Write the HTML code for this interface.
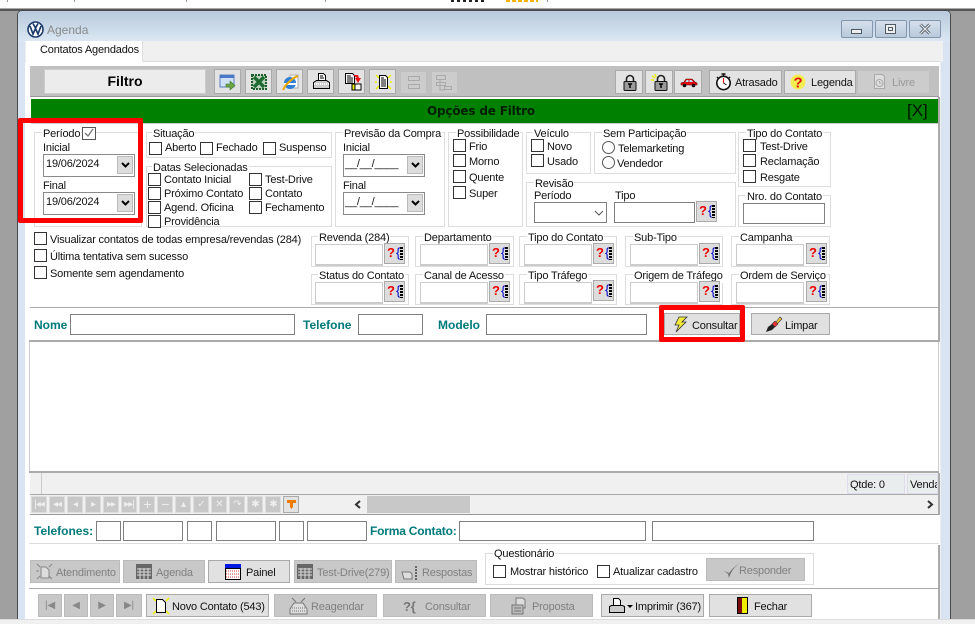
<!DOCTYPE html>
<html><head><meta charset="utf-8"><style>
html,body{margin:0;padding:0;background:#fff}
#p{position:relative;width:975px;height:624px;overflow:hidden;background:#fff;font:11px/13px "Liberation Sans",sans-serif;color:#111;letter-spacing:-.18px}
#p div,#p span.t,#p i,#p svg{position:absolute;box-sizing:border-box}
.t{white-space:nowrap;position:absolute;margin-top:1px}
i{display:block;width:13px;height:13px;border:1px solid #333;background:#fff}
.r{border-radius:50%;border-color:#555}
.g{border:1px solid #ddd}
.l{background:#fff;padding:0 1px;height:13px;white-space:nowrap}
.in{border:1px solid #808080;background:#fff}
.lin{border:1px solid #ccc;background:#fff;border-width:1px 1px 2px 1px;width:68px;height:22px}
.q{width:21px;height:21px;background:#ddd;border:1px solid #aaa;font:bold 13px/18px "Liberation Sans",sans-serif;color:#e00;padding-left:2px;white-space:nowrap;letter-spacing:0}
.q b{color:#00c;font-weight:normal;margin-left:1px}
.q u{position:absolute;right:1px;top:3px;width:3px;height:13px;background:repeating-linear-gradient(#000 0 2px,#ddd 2px 3px)}
.btn{background:#e1e1e1;border:1px solid #aaa;text-align:center}
.dis{background:#c8c8c8;border:1px solid #bbb;color:#808080}
.tb{background:#e3e3e3;border:1px solid #aaa}
.n{background:#c8c8c8;border:1px solid #ddd;width:16px;height:17px;color:#eee;font:10px/15px "Liberation Sans",sans-serif;text-align:center;letter-spacing:-1px}
.nb{background:#c8c8c8;border:1px solid #bbb;width:24px;height:23px;color:#888;font:10px/21px "Liberation Sans",sans-serif;text-align:center}
#p .te{color:#007a7a;font:bold 12px/14px "Liberation Sans",sans-serif;white-space:nowrap;letter-spacing:0;margin-top:0}
.combo{border:1px solid #8a8a8a;background:#fff}
.ar{background:#ddd;border:1px solid #bbb;width:16px;height:18px}
</style></head><body><div id="p">

<!-- top strip -->
<div style="left:7px;top:0;width:1px;height:2px;background:#999"></div>
<div style="left:74px;top:0;width:1px;height:2px;background:#999"></div>
<div style="left:186px;top:0;width:1px;height:2px;background:#999"></div>
<div style="left:325px;top:0;width:1px;height:2px;background:#999"></div>
<div style="left:451px;top:0;width:34px;height:2px;background:repeating-linear-gradient(90deg,#222 0 3px,#fff 3px 6px)"></div>
<div style="left:506px;top:0;width:32px;height:2px;background:repeating-linear-gradient(90deg,#f5b400 0 4px,#fff 4px 6px)"></div>
<div style="left:547px;top:0;width:1px;height:2px;background:#999"></div>

<!-- desktop / frame -->
<div style="left:0;top:8px;width:975px;height:2px;background:#aaa"></div>
<div style="left:0;top:9px;width:975px;height:2px;background:#555"></div>
<div style="left:0;top:11px;width:975px;height:608px;background:#a0a0a0"></div>
<div style="left:0;top:619px;width:975px;height:5px;background:#f0f0f0;border-top:1px solid #ddd"></div>
<div style="left:17px;top:10px;width:934px;height:609px;background:#4a4a4a;border-radius:5px 5px 0 0"></div>
<div style="left:18px;top:11px;width:932px;height:608px;background:#d8e4f1;border-radius:4px 4px 0 0"></div>
<div style="left:18px;top:11px;width:932px;height:30px;background:linear-gradient(#b7c9dc,#dbe7f3);border-radius:4px 4px 0 0"></div>

<!-- logo and title -->
<svg style="left:27px;top:21px" width="17" height="17" viewBox="0 0 17 17"><circle cx="8.5" cy="8.5" r="7.5" fill="#fff" stroke="#1b3a6b" stroke-width="1.6"/><path d="M3 5 L6 13 L8.5 7.5 L11 13 L14 5 M6 2.5 L8.5 7 L11 2.5" fill="none" stroke="#1b3a6b" stroke-width="1.7"/></svg>
<span class="t" style="left:47px;top:23px;font-size:12px;color:#8a8a8a;letter-spacing:0">Agenda</span>

<!-- window buttons -->
<div style="left:841px;top:20px;width:32px;height:18px;border:1px solid #8296ad;border-radius:2px;background:linear-gradient(#d5e0ec,#b9c9da)"><div style="left:9px;top:8px;width:11px;height:5px;border:1px solid #4d5a68;background:#eee"></div></div>
<div style="left:875px;top:20px;width:32px;height:18px;border:1px solid #8296ad;border-radius:2px;background:linear-gradient(#d5e0ec,#b9c9da)"><div style="left:9px;top:3px;width:11px;height:10px;border:1px solid #4d5a68;background:#eee"><div style="left:2px;top:2px;width:5px;height:4px;border:1px solid #4d5a68"></div></div></div>
<div style="left:909px;top:20px;width:32px;height:18px;border:1px solid #8296ad;border-radius:2px;background:linear-gradient(#d5e0ec,#b9c9da)"><svg style="left:9px;top:2px" width="12" height="12" viewBox="0 0 12 12"><path d="M1.5 1.5 L10.5 10.5 M10.5 1.5 L1.5 10.5" stroke="#4d5a68" stroke-width="3"/><path d="M1.5 1.5 L10.5 10.5 M10.5 1.5 L1.5 10.5" stroke="#eee" stroke-width="1.2"/></svg></div>

<!-- tab strip -->
<div style="left:25px;top:41px;width:918px;height:21px;background:#f0f0f0"></div>
<div style="left:26px;top:41px;width:117px;height:21px;background:#fff;border-right:1px solid #ddd"></div>
<span class="t" style="left:40px;top:43px">Contatos Agendados</span>
<div style="left:25px;top:61px;width:916px;height:558px;background:#fff;border-top:1px solid #ddd;border-right:1px solid #eee"></div>
<div style="left:26px;top:61px;width:116px;height:2px;background:#fff"></div>

<!-- toolbar -->
<div style="left:30px;top:66px;width:909px;height:31px;background:#c0c0c0;border-bottom:1px solid #999"></div>
<div class="tb" style="left:44px;top:69px;width:162px;height:25px;background:#ececec;border-color:#ccc;font:bold 14px/23px 'Liberation Sans',sans-serif;text-align:center;color:#000;letter-spacing:0">Filtro</div>

<div class="tb" style="left:214px;top:69px;width:27px;height:25px"><svg style="left:4px;top:4px" width="18" height="17" viewBox="0 0 18 17"><rect x="1" y="1" width="14" height="12" fill="#cfe0f7" stroke="#5c7fc0"/><rect x="1" y="1" width="14" height="3" fill="#4a78c8"/><path d="M7 10h4V7l5 4.500-5 4.500v-3H7z" fill="#6da544" stroke="#3d7a2a" stroke-width=".6"/></svg></div>
<div class="tb" style="left:245px;top:69px;width:27px;height:25px"><svg style="left:5px;top:4px" width="16" height="16" viewBox="0 0 16 16"><rect x="1" y="1" width="14" height="14" fill="#bcd0bc" stroke="#1d5c2b" stroke-width="2" stroke-dasharray="2 1"/><path d="M3 3 L13 13 M13 3 L3 13" stroke="#1d6b30" stroke-width="3.400"/></svg></div>
<div class="tb" style="left:276px;top:69px;width:27px;height:25px"><svg style="left:4px;top:3px" width="19" height="18" viewBox="0 0 19 18"><path d="M9 2h8v13H9z" fill="#fff" stroke="#aaa"/><circle cx="9" cy="10" r="6" fill="#2f7fd8"/><path d="M3 11 h12" stroke="#fff" stroke-width="2"/><path d="M2 17 C4 12 11 5 17 3" stroke="#f0a800" stroke-width="2" fill="none"/></svg></div>
<div class="tb" style="left:307px;top:69px;width:27px;height:25px"><svg style="left:5px;top:3px" width="17" height="17" viewBox="0 0 17 17"><path d="M5.500.5h5l2 2v6h-7z" fill="#fff" stroke="#000"/><path d="M7 3h3M7 5h4" stroke="#000"/><path d="M.5 9.500l3-2h10l3 2v6H.5z" fill="#ccc" stroke="#000"/><path d="M1 11h15" stroke="#fff" stroke-dasharray="1 1" stroke-width="2"/></svg></div>
<div class="tb" style="left:338px;top:69px;width:27px;height:25px"><svg style="left:5px;top:3px" width="18" height="18" viewBox="0 0 18 18"><path d="M1.500.5h7l2 2v8h-9z" fill="#fff" stroke="#000"/><path d="M3 3h4M3 5h6M3 7h6M3 9h6" stroke="#000"/><path d="M9 2h5l1 3h2l-3 5-3-5h2" fill="#e11"/><rect x="11" y="11" width="6" height="6" fill="#fff" stroke="#000"/><rect x="8" y="11" width="3" height="6" fill="#ee0" stroke="#000"/></svg></div>
<div class="tb" style="left:369px;top:69px;width:27px;height:25px"><svg style="left:4px;top:3px" width="19" height="18" viewBox="0 0 19 18"><path d="M2 2l3 3M17 2l-3 3M2 16l3-3M17 16l-3-3M1 9h2M16 9h2" stroke="#ee0" stroke-width="1.500"/><path d="M5.500 2.500h6l2 2v11h-8z" fill="#fff" stroke="#000"/><path d="M7 5h3M7 7h5M7 9h5M7 11h5M7 13h5" stroke="#000"/></svg></div>
<div style="left:401px;top:72px;width:25px;height:21px;background:#ccc"><svg style="left:6px;top:4px" width="14" height="14" viewBox="0 0 14 14" fill="none" stroke="#aaa"><rect x="1.500" y=".5" width="11" height="4"/><rect x="1.500" y="8.500" width="11" height="4"/></svg></div>
<div style="left:432px;top:72px;width:25px;height:21px;background:#ccc"><svg style="left:4px;top:3px" width="17" height="16" viewBox="0 0 17 16" fill="none" stroke="#aaa"><rect x=".5" y=".5" width="9" height="4"/><rect x=".5" y="7.500" width="9" height="3"/><path d="M4 4.500v10.500h5"/><rect x="8.500" y="11.500" width="7" height="3"/></svg></div>

<div class="tb" style="left:615px;top:70px;width:28px;height:24px"><svg style="left:7px;top:3px" width="14" height="17" viewBox="0 0 14 17"><path d="M3.500 8V5a3.500 3.500 0 017 0v3" fill="none" stroke="#222" stroke-width="1.600"/><rect x="1" y="7.500" width="12" height="9" rx="1" fill="#999" stroke="#111"/><path d="M7 10v4M5 10h4" stroke="#000" stroke-width="1.500"/></svg></div>
<div class="tb" style="left:645px;top:70px;width:28px;height:24px"><svg style="left:5px;top:3px" width="18" height="17" viewBox="0 0 18 17"><path d="M1 2l3 2M0 6h3M4 0l1 3" stroke="#ee0" stroke-width="1.400"/><path d="M6.500 8V5a3.500 3.500 0 017 0v3" fill="none" stroke="#222" stroke-width="1.600"/><rect x="4" y="7.500" width="12" height="9" rx="1" fill="#999" stroke="#111"/><path d="M10 10v4M8 10h4" stroke="#000" stroke-width="1.500"/></svg></div>
<div class="tb" style="left:674px;top:70px;width:28px;height:24px"><svg style="left:5px;top:6px" width="18" height="11" viewBox="0 0 18 11"><path d="M1 6l3-1 2-3h6l3 3 2 1v2H1z" fill="#e01010" stroke="#600" stroke-width=".6"/><path d="M6.500 3h2v2h-3zM9.500 3h2l1.500 2H9.500z" fill="#bfe4ff"/><circle cx="4.500" cy="8.500" r="1.800" fill="#111"/><circle cx="13.500" cy="8.500" r="1.800" fill="#111"/></svg></div>

<div class="tb" style="left:709px;top:70px;width:73px;height:24px"><svg style="left:5px;top:2px" width="17" height="18" viewBox="0 0 17 18"><circle cx="8.500" cy="10" r="6.700" fill="#fff" stroke="#111" stroke-width="1.600"/><path d="M6.500 1h4M8.500 1v2M2 4l2 2M15 4l-2 2" stroke="#111" stroke-width="1.400"/><path d="M8.500 5v5" stroke="#e11" stroke-width="1.200"/><path d="M8.500 10l3 2" stroke="#111"/></svg><span class="t" style="left:25px;top:5px">Atrasado</span></div>
<div class="tb" style="left:784px;top:70px;width:72px;height:24px"><svg style="left:5px;top:3px" width="16" height="16" viewBox="0 0 16 16"><circle cx="8" cy="8" r="7.500" fill="#f2ee50"/><text x="8" y="13.500" text-anchor="middle" font-family="Liberation Sans" font-weight="bold" font-size="15" fill="#e01010">?</text></svg><span class="t" style="left:26px;top:5px">Legenda</span></div>
<div style="left:858px;top:71px;width:71px;height:22px;background:#ccc;color:#999"><svg style="left:14px;top:2px" width="15" height="17" viewBox="0 0 15 17" fill="none" stroke="#aaa"><path d="M2.500 1.500h8l2 2v12h-10z" fill="#ddd"/><circle cx="7.500" cy="10" r="3.500"/><path d="M7.500 8v2h2"/></svg><span class="t" style="left:34px;top:5px">Livre</span></div>

<!-- green bar -->
<div style="left:31px;top:99px;width:907px;height:25px;background:#008000;border-bottom:1px solid #ccc"></div>
<span class="t" style="left:427px;top:103px;font:bold 12px/15px 'DejaVu Sans',sans-serif;color:#021f02">Opções de Filtro</span>
<span class="t" style="left:907px;top:101px;font:17px/18px 'Liberation Sans',sans-serif;color:#010;letter-spacing:0">[X]</span>
<div style="left:938px;top:97px;width:2px;height:244px;background:#aaa"></div>

<!-- Periodo group -->
<div class="g" style="left:34px;top:132px;width:108px;height:95px"></div>
<span class="t l" style="left:42px;top:127px">Período</span>
<i style="left:82px;top:127px;width:14px;height:13px;border-color:#555;z-index:1"></i>
<svg style="left:83px;top:128px;z-index:2" width="12" height="11" viewBox="0 0 12 11"><path d="M2 5l3 3 5-7" fill="none" stroke="#777" stroke-width="1.300"/></svg>
<span class="t" style="left:43px;top:141px">Inicial</span>
<div class="combo" style="left:43px;top:154px;width:92px;height:23px"></div>
<span class="t" style="left:46px;top:157px">19/06/2024</span>
<div class="ar" style="left:117px;top:156px"><svg style="left:3px;top:5px" width="9" height="7" viewBox="0 0 9 7"><path d="M1 1l3.500 3.500L8 1" fill="none" stroke="#000" stroke-width="2"/></svg></div>
<span class="t" style="left:43px;top:179px">Final</span>
<div class="combo" style="left:43px;top:192px;width:92px;height:23px"></div>
<span class="t" style="left:46px;top:195px">19/06/2024</span>
<div class="ar" style="left:117px;top:194px"><svg style="left:3px;top:5px" width="9" height="7" viewBox="0 0 9 7"><path d="M1 1l3.500 3.500L8 1" fill="none" stroke="#000" stroke-width="2"/></svg></div>

<!-- Situacao -->
<div class="g" style="left:146px;top:132px;width:186px;height:26px"></div>
<span class="t l" style="left:152px;top:127px">Situação</span>
<i style="left:149px;top:142px"></i><span class="t" style="left:165px;top:141px">Aberto</span>
<i style="left:200px;top:142px"></i><span class="t" style="left:216px;top:141px">Fechado</span>
<i style="left:263px;top:142px"></i><span class="t" style="left:279px;top:141px">Suspenso</span>

<!-- Datas -->
<div class="g" style="left:146px;top:166px;width:186px;height:61px"></div>
<span class="t l" style="left:152px;top:161px">Datas Selecionadas</span>
<i style="left:148px;top:173px"></i><span class="t" style="left:164px;top:173px">Contato Inicial</span>
<i style="left:148px;top:187px"></i><span class="t" style="left:164px;top:187px">Próximo Contato</span>
<i style="left:148px;top:201px"></i><span class="t" style="left:164px;top:201px">Agend. Oficina</span>
<i style="left:148px;top:215px"></i><span class="t" style="left:164px;top:215px">Providência</span>
<i style="left:249px;top:173px"></i><span class="t" style="left:265px;top:173px">Test-Drive</span>
<i style="left:249px;top:187px"></i><span class="t" style="left:265px;top:187px">Contato</span>
<i style="left:249px;top:201px"></i><span class="t" style="left:265px;top:201px">Fechamento</span>

<!-- Previsao -->
<div class="g" style="left:335px;top:132px;width:110px;height:95px"></div>
<span class="t l" style="left:343px;top:127px">Previsão da Compra</span>
<span class="t" style="left:343px;top:141px">Inicial</span>
<div class="combo" style="left:343px;top:154px;width:82px;height:23px"></div>
<span class="t" style="left:345px;top:157px">__/__/____</span>
<div class="ar" style="left:407px;top:156px"><svg style="left:3px;top:5px" width="9" height="7" viewBox="0 0 9 7"><path d="M1 1l3.500 3.500L8 1" fill="none" stroke="#000" stroke-width="2"/></svg></div>
<span class="t" style="left:343px;top:179px">Final</span>
<div class="combo" style="left:343px;top:192px;width:82px;height:23px"></div>
<span class="t" style="left:345px;top:195px">__/__/____</span>
<div class="ar" style="left:407px;top:194px"><svg style="left:3px;top:5px" width="9" height="7" viewBox="0 0 9 7"><path d="M1 1l3.500 3.500L8 1" fill="none" stroke="#000" stroke-width="2"/></svg></div>

<!-- Possibilidade -->
<div class="g" style="left:448px;top:132px;width:75px;height:95px"></div>
<span class="t l" style="left:456px;top:127px">Possibilidade</span>
<i style="left:453px;top:139px"></i><span class="t" style="left:469px;top:140px">Frio</span>
<i style="left:453px;top:154px"></i><span class="t" style="left:469px;top:155px">Morno</span>
<i style="left:453px;top:170px"></i><span class="t" style="left:469px;top:171px">Quente</span>
<i style="left:453px;top:186px"></i><span class="t" style="left:469px;top:187px">Super</span>

<!-- Veiculo -->
<div class="g" style="left:526px;top:132px;width:65px;height:42px"></div>
<span class="t l" style="left:533px;top:127px">Veículo</span>
<i style="left:531px;top:139px"></i><span class="t" style="left:547px;top:140px">Novo</span>
<i style="left:531px;top:154px"></i><span class="t" style="left:547px;top:155px">Usado</span>

<!-- Sem Participacao -->
<div class="g" style="left:594px;top:132px;width:142px;height:42px"></div>
<span class="t l" style="left:602px;top:127px">Sem Participação</span>
<i class="r" style="left:602px;top:141px"></i><span class="t" style="left:618px;top:142px">Telemarketing</span>
<i class="r" style="left:602px;top:156px"></i><span class="t" style="left:617px;top:157px">Vendedor</span>

<!-- Revisao -->
<div class="g" style="left:526px;top:182px;width:210px;height:45px"></div>
<span class="t l" style="left:534px;top:177px">Revisão</span>
<span class="t" style="left:534px;top:189px">Período</span>
<span class="t" style="left:615px;top:189px">Tipo</span>
<div class="in" style="left:534px;top:202px;width:73px;height:21px"><svg style="left:59px;top:7px" width="10" height="7" viewBox="0 0 10 7"><path d="M1 1l4 4 4-4" fill="none" stroke="#555"/></svg></div>
<div class="in" style="left:614px;top:202px;width:81px;height:21px"></div>
<div class="q" style="left:696px;top:201px">?<b>{</b><u></u></div>

<!-- Tipo do Contato -->
<div class="g" style="left:738px;top:132px;width:93px;height:55px"></div>
<span class="t l" style="left:746px;top:127px">Tipo do Contato</span>
<i style="left:743px;top:139px"></i><span class="t" style="left:760px;top:140px">Test-Drive</span>
<i style="left:743px;top:154px"></i><span class="t" style="left:760px;top:155px">Reclamação</span>
<i style="left:743px;top:170px"></i><span class="t" style="left:760px;top:171px">Resgate</span>

<!-- Nro -->
<div class="g" style="left:738px;top:195px;width:93px;height:32px"></div>
<span class="t l" style="left:746px;top:190px">Nro. do Contato</span>
<div class="in" style="left:743px;top:203px;width:82px;height:21px"></div>

<!-- checks -->
<i style="left:34px;top:232px"></i><span class="t" style="left:50px;top:233px">Visualizar contatos de todas empresa/revendas (284)</span>
<i style="left:34px;top:249px"></i><span class="t" style="left:50px;top:250px">Última tentativa sem sucesso</span>
<i style="left:34px;top:266px"></i><span class="t" style="left:50px;top:267px">Somente sem agendamento</span>

<!-- lookup row 1 -->
<div class="g" style="left:311px;top:236px;width:98px;height:31px"></div><span class="t l" style="left:318px;top:231px">Revenda (284)</span><div class="lin" style="left:315px;top:244px"></div><div class="q" style="left:384px;top:243px">?<b>{</b><u></u></div>
<div class="g" style="left:415px;top:236px;width:99px;height:31px"></div><span class="t l" style="left:423px;top:231px">Departamento</span><div class="lin" style="left:420px;top:244px"></div><div class="q" style="left:489px;top:243px">?<b>{</b><u></u></div>
<div class="g" style="left:519px;top:236px;width:98px;height:31px"></div><span class="t l" style="left:527px;top:231px">Tipo do Contato</span><div class="lin" style="left:524px;top:244px"></div><div class="q" style="left:593px;top:243px">?<b>{</b><u></u></div>
<div class="g" style="left:625px;top:236px;width:98px;height:31px"></div><span class="t l" style="left:633px;top:231px">Sub-Tipo</span><div class="lin" style="left:630px;top:244px"></div><div class="q" style="left:699px;top:243px">?<b>{</b><u></u></div>
<div class="g" style="left:731px;top:236px;width:99px;height:31px"></div><span class="t l" style="left:739px;top:231px">Campanha</span><div class="lin" style="left:736px;top:244px"></div><div class="q" style="left:806px;top:243px">?<b>{</b><u></u></div>

<!-- lookup row 2 -->
<div class="g" style="left:311px;top:274px;width:98px;height:31px"></div><span class="t l" style="left:318px;top:269px">Status do Contato</span><div class="lin" style="left:315px;top:282px"></div><div class="q" style="left:384px;top:281px">?<b>{</b><u></u></div>
<div class="g" style="left:415px;top:274px;width:99px;height:31px"></div><span class="t l" style="left:423px;top:269px">Canal de Acesso</span><div class="lin" style="left:420px;top:282px"></div><div class="q" style="left:489px;top:281px">?<b>{</b><u></u></div>
<div class="g" style="left:519px;top:274px;width:98px;height:31px"></div><span class="t l" style="left:527px;top:269px">Tipo Tráfego</span><div class="lin" style="left:524px;top:282px"></div><div class="q" style="left:593px;top:280px">?<b>{</b><u></u></div>
<div class="g" style="left:625px;top:274px;width:98px;height:31px"></div><span class="t l" style="left:633px;top:269px">Origem de Tráfego</span><div class="lin" style="left:630px;top:282px"></div><div class="q" style="left:699px;top:281px">?<b>{</b><u></u></div>
<div class="g" style="left:731px;top:274px;width:99px;height:31px"></div><span class="t l" style="left:739px;top:269px">Ordem de Serviço</span><div class="lin" style="left:736px;top:282px"></div><div class="q" style="left:806px;top:281px">?<b>{</b><u></u></div>

<div style="left:30px;top:307px;width:908px;height:1px;background:#aaa"></div>

<!-- Search row -->
<span class="t te" style="left:34px;top:318px">Nome</span>
<div class="in" style="left:70px;top:314px;width:225px;height:21px"></div>
<span class="t te" style="left:303px;top:318px">Telefone</span>
<div class="in" style="left:358px;top:314px;width:65px;height:21px"></div>
<span class="t te" style="left:438px;top:318px">Modelo</span>
<div class="in" style="left:486px;top:314px;width:161px;height:21px"></div>
<div class="btn" style="left:664px;top:313px;width:76px;height:22px"><svg style="left:8px;top:2px" width="16" height="17" viewBox="0 0 16 17"><path d="M6 1h8L9 6h4L3 16l3-7H2z" fill="#f3e93a" stroke="#333" stroke-width=".8"/></svg><span class="t" style="left:27px;top:5px">Consultar</span></div>
<div class="btn" style="left:751px;top:313px;width:79px;height:22px"><svg style="left:13px;top:2px" width="18" height="17" viewBox="0 0 18 17"><path d="M11 6l4-5 2 2-5 5z" fill="#f0c830" stroke="#333" stroke-width=".6"/><path d="M7 8l3-3 3 3-3 3z" fill="#e33" stroke="#333" stroke-width=".6"/><path d="M1 16l2-5 4-3 3 3-3 3z" fill="#222"/></svg><span class="t" style="left:33px;top:5px">Limpar</span></div>

<!-- Grid -->
<div style="left:29px;top:340px;width:911px;height:2px;background:#aaa"></div>
<div style="left:29px;top:342px;width:910px;height:131px;background:#fff;border-left:1px solid #ccc;border-right:1px solid #ccc"></div>
<div style="left:29px;top:471px;width:910px;height:2px;background:#aaa"></div>
<div style="left:30px;top:473px;width:908px;height:21px;background:#f0f0f0"></div>
<div style="left:41px;top:473px;width:1px;height:21px;background:#ccc"></div>
<div style="left:847px;top:474px;width:58px;height:20px;background:#e9edee;border:1px solid #dde"></div>
<span class="t" style="left:850px;top:478px">Qtde: 0</span>
<div style="left:907px;top:474px;width:31px;height:20px;background:#e9edee;overflow:hidden;border:1px solid #dde"><span class="t" style="left:2px;top:3px">Vendas</span></div>
<div style="left:30px;top:494px;width:908px;height:1px;background:#aaa"></div>
<div style="left:30px;top:495px;width:908px;height:19px;background:#f0f0f0"></div>
<div style="left:30px;top:514px;width:908px;height:1px;background:#999"></div>
<div style="left:938px;top:473px;width:2px;height:42px;background:#aaa"></div>

<!-- Nav -->
<div class="n" style="left:31px;top:496px">|◂◂</div>
<div class="n" style="left:49px;top:496px">◂◂</div>
<div class="n" style="left:67px;top:496px">◂</div>
<div class="n" style="left:85px;top:496px">▸</div>
<div class="n" style="left:103px;top:496px">▸▸</div>
<div class="n" style="left:121px;top:496px">▸▸|</div>
<div class="n" style="left:139px;top:496px;font-size:14px">+</div>
<div class="n" style="left:157px;top:496px;font-size:14px">−</div>
<div class="n" style="left:175px;top:496px">▴</div>
<div class="n" style="left:193px;top:496px">✓</div>
<div class="n" style="left:211px;top:496px">✕</div>
<div class="n" style="left:229px;top:496px">↷</div>
<div class="n" style="left:247px;top:496px">✱</div>
<div class="n" style="left:265px;top:496px">✱</div>
<div style="left:283px;top:496px;width:16px;height:17px;background:#e3e3e3;border:1px solid #aaa"><svg style="left:3px;top:3px" width="9" height="10" viewBox="0 0 9 10"><path d="M0 0h9v3H6v4L4.500 9 3 7V3H0z" fill="#ee7a00"/></svg></div>
<svg style="left:354px;top:500px" width="8" height="9" viewBox="0 0 8 9"><path d="M6 1L2 4.500 6 8" fill="none" stroke="#333" stroke-width="2"/></svg>
<div style="left:367px;top:496px;width:103px;height:17px;background:#c8c8c8"></div>
<svg style="left:926px;top:500px" width="8" height="9" viewBox="0 0 8 9"><path d="M2 1l4 3.500L2 8" fill="none" stroke="#333" stroke-width="2"/></svg>

<!-- telefones -->
<span class="t te" style="left:34px;top:524px">Telefones:</span>
<div class="in" style="left:96px;top:521px;width:25px;height:20px"></div>
<div class="in" style="left:123px;top:521px;width:60px;height:20px"></div>
<div class="in" style="left:187px;top:521px;width:25px;height:20px"></div>
<div class="in" style="left:216px;top:521px;width:60px;height:20px"></div>
<div class="in" style="left:279px;top:521px;width:25px;height:20px"></div>
<div class="in" style="left:307px;top:521px;width:60px;height:20px"></div>
<span class="t te" style="left:370px;top:524px;letter-spacing:-.2px">Forma Contato:</span>
<div class="in" style="left:459px;top:521px;width:187px;height:20px"></div>
<div class="in" style="left:652px;top:521px;width:162px;height:20px"></div>
<div style="left:29px;top:543px;width:910px;height:1px;background:#ddd"></div>
<div style="left:938px;top:545px;width:2px;height:74px;background:#aaa"></div>

<!-- action buttons -->
<div class="dis" style="left:30px;top:560px;width:90px;height:23px"><svg style="left:5px;top:2px" width="17" height="17" viewBox="0 0 17 17"><path d="M5 4h5l3 3v8H5z" fill="#ddd" stroke="#888"/><path d="M1 1l3 3M16 1l-3 3M1 16l3-3M16 16l-3-3M0 8h3" stroke="#888"/></svg><span class="t" style="left:25px;top:5px">Atendimento</span></div>
<div class="dis" style="left:123px;top:560px;width:82px;height:23px"><svg style="left:12px;top:3px" width="16" height="15" viewBox="0 0 16 15"><rect width="16" height="15" fill="#666"/><path d="M1 5h14M1 8h14M1 11h14M4 4v11M8 4v11M12 4v11" stroke="#ddd"/></svg><span class="t" style="left:32px;top:5px">Agenda</span></div>
<div class="btn" style="left:208px;top:560px;width:82px;height:23px"><svg style="left:16px;top:3px" width="16" height="16" viewBox="0 0 16 16"><rect width="16" height="16" fill="#000"/><rect width="16" height="4" fill="#0018e0"/><rect x="1" y="5" width="14" height="10" fill="#fff"/><path d="M1 7h14M1 10h14M1 13h14" stroke="#d33" stroke-dasharray="1 1"/></svg><span class="t" style="left:37px;top:5px">Painel</span></div>
<div class="dis" style="left:294px;top:560px;width:98px;height:23px"><svg style="left:2px;top:3px" width="16" height="15" viewBox="0 0 16 15"><rect width="16" height="15" fill="#666"/><path d="M1 5h14M1 8h14M1 11h14M4 4v11M8 4v11M12 4v11" stroke="#ddd"/></svg><span class="t" style="left:22px;top:5px">Test-Drive(279)</span></div>
<div class="dis" style="left:395px;top:560px;width:82px;height:23px"><svg style="left:5px;top:3px" width="18" height="17" viewBox="0 0 18 17"><path d="M1 8h8l2 2v5H3z" fill="#ddd" stroke="#777"/><path d="M15 2v14" stroke="#666" stroke-width="2" stroke-dasharray="2 1"/></svg><span class="t" style="left:26px;top:5px">Respostas</span></div>

<div class="g" style="left:485px;top:553px;width:329px;height:32px"></div>
<span class="t l" style="left:493px;top:547px">Questionário</span>
<i style="left:493px;top:565px"></i><span class="t" style="left:510px;top:565px">Mostrar histórico</span>
<i style="left:597px;top:565px"></i><span class="t" style="left:613px;top:565px">Atualizar cadastro</span>
<div class="dis" style="left:706px;top:558px;width:99px;height:23px"><svg style="left:16px;top:3px" width="18" height="18" viewBox="0 0 18 18"><path d="M1 9l4 3 1 4C8 10 11 5 17 1 12 4 8 8 6 11z" fill="#777"/></svg><span class="t" style="left:32px;top:5px">Responder</span></div>
<div style="left:29px;top:588px;width:910px;height:1px;background:#aaa"></div>

<!-- bottom nav -->
<div class="nb" style="left:38px;top:594px">|◀</div>
<div class="nb" style="left:64px;top:594px">◀</div>
<div class="nb" style="left:90px;top:594px">▶</div>
<div class="nb" style="left:116px;top:594px;width:26px">▶|</div>
<div class="btn" style="left:146px;top:594px;width:123px;height:23px"><svg style="left:5px;top:2px" width="18" height="18" viewBox="0 0 18 18"><path d="M1 1l3 3M17 1l-3 3M1 17l3-3M17 17l-3-3" stroke="#ee0" stroke-width="1.500"/><path d="M4.500 2.500h6l3 3v10h-9z" fill="#fff" stroke="#000"/></svg><span class="t" style="left:25px;top:5px">Novo Contato (543)</span></div>
<div class="dis" style="left:274px;top:594px;width:103px;height:23px"><svg style="left:14px;top:2px" width="19" height="18" viewBox="0 0 19 18"><path d="M3 1l4 4M16 1l-4 4" stroke="#777"/><path d="M1 12l4-6h9l4 6v5H1z" fill="#ddd" stroke="#777"/><path d="M3 11h13M3 14h13" stroke="#777" stroke-dasharray="1 1"/></svg><span class="t" style="left:36px;top:5px">Reagendar</span></div>
<div class="dis" style="left:383px;top:594px;width:103px;height:23px;font:bold 13px/20px 'Liberation Sans',sans-serif"><span class="t" style="left:19px;top:1px;color:#777">?{</span><span class="t" style="left:41px;top:5px;font:11px/13px 'Liberation Sans',sans-serif;letter-spacing:-.18px">Consultar</span></div>
<div class="dis" style="left:490px;top:594px;width:103px;height:23px"><svg style="left:20px;top:2px" width="17" height="18" viewBox="0 0 17 18"><path d="M5 1h7l2 2v8H5z" fill="#ddd" stroke="#777"/><path d="M1 8h11v9H1z" fill="#bbb" stroke="#777"/><path d="M3 11h7M3 14h7" stroke="#777"/></svg><span class="t" style="left:41px;top:5px">Proposta</span></div>
<div class="btn" style="left:601px;top:594px;width:103px;height:23px"><svg style="left:7px;top:3px" width="24" height="16" viewBox="0 0 24 16"><path d="M4.500.5h5l2 2v5h-7z" fill="#fff" stroke="#000"/><path d="M.5 8.500l2-1h11l2 1v6H.5z" fill="#ccc" stroke="#000"/><path d="M18 7h6l-3 3z" fill="#000"/></svg><span class="t" style="left:33px;top:5px">Imprimir (367)</span></div>
<div class="btn" style="left:709px;top:594px;width:103px;height:23px"><svg style="left:27px;top:2px" width="11" height="17" viewBox="0 0 11 17"><rect x=".5" y=".5" width="10" height="16" fill="#ee0" stroke="#000"/><path d="M1 1h4v15H1z" fill="#7a0c0c"/></svg><span class="t" style="left:44px;top:5px">Fechar</span></div>

<!-- red highlights -->
<div style="left:18px;top:118px;width:125px;height:105px;border:5px solid #f00;border-radius:2px;z-index:5"></div>
<div style="left:659px;top:305px;width:86px;height:37px;border:5px solid #f00;border-radius:2px;z-index:5"></div>

</div></body></html>
